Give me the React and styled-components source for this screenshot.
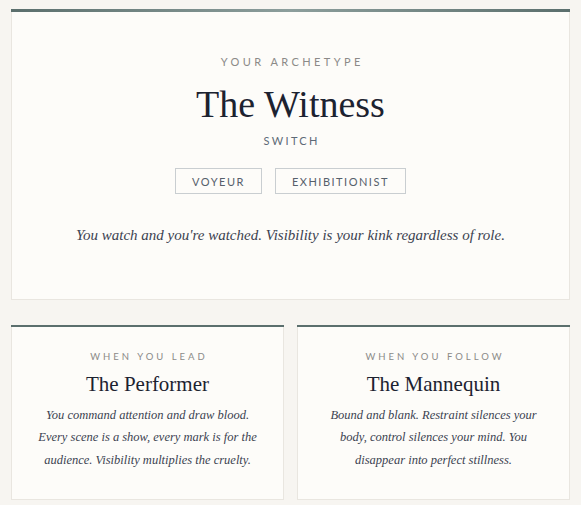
import React from "react";
import styled, { createGlobalStyle } from "styled-components";

const Global = createGlobalStyle`
  html, body { margin: 0; padding: 0; background: #f7f5f1; }
  body { font-family: "Liberation Serif", serif; }
`;

const Page = styled.div`
  padding: 9px 11px 0;
  display: flex;
  flex-direction: column;
  gap: 25px;
`;

const Card = styled.section`
  background: #fdfcf9;
  border: 1px solid #e9e6e0;
  border-top: none;
  position: relative;
  display: flex;
  flex-direction: column;
  align-items: center;
  text-align: center;
  padding: ${(p) => p.$pad};
  &::before {
    content: "";
    position: absolute;
    left: -1px;
    right: -1px;
    top: 0;
    height: ${(p) => p.$bar}px;
    background: ${(p) => p.$gradient
      ? "linear-gradient(90deg, #5b6f6d 0%, #8c9e9c 50%, #5b6f6d 100%)"
      : "#5b6f6d"};
  }
`;

const Eyebrow = styled.div`
  font-family: "Lato", "Open Sans", sans-serif;
  font-size: ${(p) => p.$size}px;
  line-height: ${(p) => p.$size + 3}px;
  letter-spacing: ${(p) => p.$spacing}px;
  text-transform: uppercase;
  color: #8b8a88;
  margin-right: -${(p) => p.$spacing}px;
`;

const Title = styled.h1`
  margin: ${(p) => p.$margin};
  font-family: "Liberation Serif", serif;
  font-weight: 400;
  font-size: ${(p) => p.$size}px;
  line-height: ${(p) => p.$line}px;
  color: #1c2230;
`;

const Role = styled.div`
  font-family: "Lato", "Open Sans", sans-serif;
  font-size: 11px;
  line-height: 14px;
  letter-spacing: 2.3px;
  margin-right: -2.3px;
  color: #5d6a77;
  text-transform: uppercase;
`;

const Tags = styled.div`
  display: flex;
  gap: 13px;
  margin-top: 20px;
`;

const Tag = styled.span`
  height: 26px;
  box-sizing: border-box;
  border: 1px solid #c9ced1;
  padding: 0 16px;
  display: flex;
  align-items: center;
  font-family: "Lato", "Open Sans", sans-serif;
  font-size: 11px;
  letter-spacing: 1.5px;
  color: #56606b;
  text-transform: uppercase;
`;

const Lead = styled.p`
  margin: 29px 0 0;
  font-style: italic;
  font-size: 15px;
  line-height: 24px;
  color: #3b4250;
`;

const Grid = styled.div`
  display: grid;
  grid-template-columns: 1fr 1fr;
  gap: 13px;
`;

const Body = styled.p`
  margin: 7px 0 0;
  font-style: italic;
  font-size: 12.5px;
  line-height: 22.5px;
  color: #3b4250;
`;

const roles = [
  {
    label: "When you lead",
    title: "The Performer",
    text: "You command attention and draw blood. Every scene is a show, every mark is for the audience. Visibility multiplies the cruelty.",
  },
  {
    label: "When you follow",
    title: "The Mannequin",
    text: "Bound and blank. Restraint silences your body, control silences your mind. You disappear into perfect stillness.",
  },
];

export default function App() {
  return (
    <>
      <Global />
      <Page>
        <Card $bar={3} $gradient $pad="46px 20px 52px">
          <Eyebrow $size={11} $spacing={3.4}>Your Archetype</Eyebrow>
          <Title $size={38} $line={42} $margin="14px 0 9px">The Witness</Title>
          <Role>Switch</Role>
          <Tags>
            <Tag>Voyeur</Tag>
            <Tag>Exhibitionist</Tag>
          </Tags>
          <Lead>You watch and you're watched. Visibility is your kink regardless of role.</Lead>
        </Card>
        <Grid>
          {roles.map((r) => (
            <Card key={r.title} $bar={2} $pad="26px 26px 28px">
              <Eyebrow $size={9.5} $spacing={3}>{r.label}</Eyebrow>
              <Title as="h2" $size={21} $line={26} $margin="7px 0 0">{r.title}</Title>
              <Body>{r.text}</Body>
            </Card>
          ))}
        </Grid>
      </Page>
    </>
  );
}
